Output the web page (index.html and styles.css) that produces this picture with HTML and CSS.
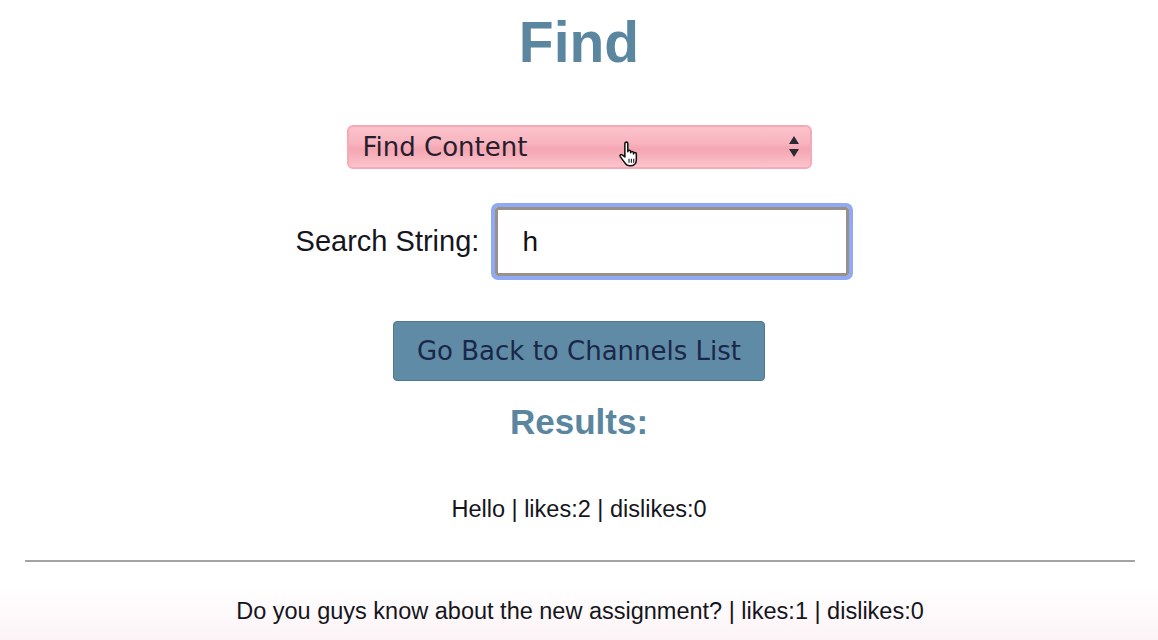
FILE: index.html
```html
<!DOCTYPE html>
<html lang="en">
<head>
<meta charset="utf-8">
<title>Find</title>
<link rel="stylesheet" href="styles.css">
</head>
<body>
<main class="page">
  <h1 class="title">Find</h1>
  <div class="select">
    <span class="select-text">Find Content</span>
    <svg class="select-arrows" width="12" height="24" viewBox="0 0 12 24" aria-hidden="true">
      <path d="M6 1 L11 9 H1 Z" fill="#2a2a33"/>
      <path d="M1 14 H11 L6 22 Z" fill="#2a2a33"/>
    </svg>
    <svg class="cursor" width="24" height="26" viewBox="0 0 18 22" aria-hidden="true">
      <path d="M5.5 2.2 a1.25 1.25 0 0 1 2.5 0 V9 a1.2 1.2 0 0 1 2.4 0 V10 a1.2 1.2 0 0 1 2.4 0 V11 a1.2 1.2 0 0 1 2.4 0 V16 c0 3 -2 5 -5 5 H9.5 c-2 0 -3 -1 -4 -2.5 L1.6 13.2 c-0.7 -1 0.5 -2.3 1.6 -1.5 L5.5 13.5 Z" fill="#fff" stroke="#111" stroke-width="1.3" stroke-linejoin="round"/>
      <path d="M9 15 V18.5 M11 15 V18.5 M13 15 V18.5" stroke="#111" stroke-width="0.9"/>
    </svg>
  </div>
  <div class="search-row">
    <label class="search-label" for="q">Search String:</label>
    <input class="search-input" id="q" type="text" value="h">
  </div>
  <button class="back-btn" type="button">Go Back to Channels List</button>
  <h2 class="results-title">Results:</h2>
  <ul class="results">
    <li class="result">Hello | likes:2 | dislikes:0</li>
    <li class="result">Do you guys know about the new assignment? | likes:1 | dislikes:0</li>
  </ul>
</main>
</body>
</html>
```
FILE: styles.css
```css
html {
  background: linear-gradient(to bottom, #ffffff 0, #ffffff 585px, #fcf3f6 640px);
  min-height: 100%;
}
body {
  margin: 0;
  font-family: "Liberation Sans", Arial, sans-serif;
  color: #15151c;
}
.page {
  display: flex;
  flex-direction: column;
  align-items: center;
}
.title {
  margin: 14px 0 0;
  font-size: 57px;
  line-height: 57px;
  font-weight: bold;
  color: #5a869f;
}
.select {
  position: relative;
  margin-top: 54px;
  width: 465px;
  height: 44px;
  box-sizing: border-box;
  border: 2px solid #f6a9b7;
  border-radius: 6px;
  background: linear-gradient(to bottom, #fbc3cb 0%, #f8b4bf 40%, #f4a6b2 55%, #f8b6c0 80%, #fbc5cd 100%);
  display: flex;
  align-items: center;
  justify-content: space-between;
  padding: 0 10px 0 14px;
  font-family: "DejaVu Sans", Verdana, sans-serif;
  font-size: 26px;
  color: #261d2d;
}
.select-text {
  line-height: 1;
}
.select-arrows {
  display: block;
}
.cursor {
  position: absolute;
  left: 268px;
  top: 14px;
}
.search-row {
  display: flex;
  align-items: center;
  margin-top: 34px;
  gap: 16px;
}
.search-label {
  font-size: 29px;
  color: #15151c;
}
.search-input {
  width: 354px;
  height: 69px;
  box-sizing: border-box;
  margin: 4px 13px 4px 0;
  border: 3px solid #9b8f8a;
  border-radius: 3px;
  outline: 4px solid #8eaaf2;
  outline-offset: 0;
  padding: 0 0 0 24px;
  font-family: "Liberation Sans", Arial, sans-serif;
  font-size: 28px;
  color: #111;
  background: #fff;
}
.back-btn {
  margin-top: 41px;
  width: 372px;
  height: 60px;
  box-sizing: border-box;
  background: #5f8ba6;
  border: 1px solid #4e7791;
  border-radius: 4px;
  font-family: "DejaVu Sans", Verdana, sans-serif;
  font-size: 26px;
  color: #1b2748;
  padding: 0;
}
.results-title {
  margin: 21px 0 0;
  font-size: 35px;
  line-height: 40px;
  font-weight: bold;
  color: #5a869f;
}
.results {
  list-style: none;
  margin: 0;
  padding: 0;
  align-self: stretch;
}
.result {
  font-size: 23.5px;
  line-height: 27px;
  text-align: center;
  padding: 54px 0 37px;
}
.result + .result {
  border-top: 2px solid #a3a3a3;
  margin: 0 23px 0 25px;
  padding-top: 36px;
}
```
